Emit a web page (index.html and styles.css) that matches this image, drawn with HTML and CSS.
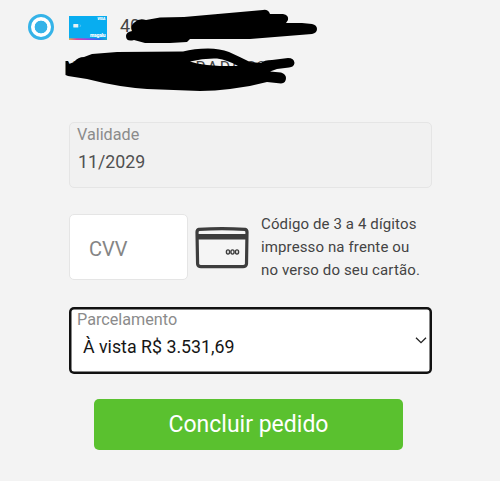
FILE: index.html
```html
<!DOCTYPE html>
<html lang="pt-BR">
<head>
<meta charset="utf-8">
<title>Pagamento</title>
<link rel="stylesheet" href="styles.css">
</head>
<body>
<main class="checkout">
  <section class="saved-card">
    <span class="radio"></span>
    <svg class="card-art" viewBox="0 0 38 24">
      <defs><linearGradient id="rainbow"><stop offset="0" stop-color="#ddb64c"/><stop offset=".2" stop-color="#e8409a"/><stop offset=".5" stop-color="#8a48e8"/><stop offset=".8" stop-color="#2c6cf0"/><stop offset="1" stop-color="#20b5c4"/></linearGradient></defs>
      <rect width="38" height="24" fill="#08adf0"/>
      <rect y="22.3" width="38" height="1.7" fill="url(#rainbow)"/>
      <rect x="4.3" y="8" width="5" height="3.4" rx=".5" fill="#e6f3f5"/>
      <path d="M11 8.6q1.2 1 0 2.3" stroke="#7bd0f3" stroke-width=".7" fill="none"/>
      <text x="28.3" y="4.4" class="brand" textLength="8">VISA</text>
      <text x="21" y="21" class="bank" textLength="15.5">magalu</text>
    </svg>
    <span class="number">40</span>
    <div class="holder"><span>N</span><span class="surname">RADO</span><span class="last">SO</span></div>
    <svg class="redaction" viewBox="0 0 500 100">
      <path d="M126 36Q126 32 132 31Q130 25 135 22Q139 18 146 20L160 17.5L184 17L263 10Q268 9 270 14L283 14Q289 15 288 20L286 23L302 23L312 24Q317 25 317 29Q317 33 312 34L250 39L190 39L187 42L170 43L145 43L134 40Q126 42 126 36Z"/>
      <path fill-rule="evenodd" d="M65.500 61L68 61L69 64L74 62Q78 57 84 57L92 54L117 52L183 51.500Q194 48.500 208 48.500Q220 48.500 229 52Q240 57 250 62L261 63Q264 60 272 60L288 58Q294 58 294.500 63Q294 67 289 67.500L277 69L270 71.500L281 72.500Q286 74 286 78Q286 83 281 83.500L267 82Q249 87 230 89Q215 91 200 91L147 89Q118 87 87 79L68 76L65.500 75ZM190 61.500L197 63.500L207 65L220 66L238 66Q228 60 217 58.500Q204 58 190 61.500Z"/>
    </svg>
  </section>
  <section class="form">
    <div class="field expiry"><label>Validade</label><span class="value">11/2029</span></div>
    <div class="security">
      <div class="cvv">CVV</div>
      <svg class="cvv-icon" viewBox="0 0 54 42">
        <path d="M4 2.400Q27 .8 50 2.400Q52 3 52 5L51.500 37Q51 39.600 48 39.600H6Q3 39.600 2.600 37L2 5Q2 3 4 2.400Z" fill="#f5f5f5" stroke="#3d3d3d" stroke-width="3.200"/>
        <path d="M2 9.700H52" stroke="#3d3d3d" stroke-width="5.400"/>
        <g fill="none" stroke="#3d3d3d" stroke-width="1.400"><ellipse cx="33" cy="25" rx="1.600" ry="2.100"/><ellipse cx="37.500" cy="25" rx="1.600" ry="2.100"/><ellipse cx="42" cy="25" rx="1.600" ry="2.100"/></g>
      </svg>
      <p class="hint">Código de 3 a 4 dígitos<br>impresso na frente ou<br>no verso do seu cartão.</p>
    </div>
    <div class="field installments">
      <label>Parcelamento</label><span class="value">À vista R$ 3.531,69</span>
      <svg class="chevron" viewBox="0 0 12 7"><path d="M1 .8L6 5.600L11 .8" fill="none" stroke="#222" stroke-width="1.300"/></svg>
    </div>
    <button class="submit">Concluir pedido</button>
  </section>
</main>
</body>
</html>
```
FILE: styles.css
```css
* { box-sizing: border-box; }
body { margin: 0; background: #f3f3f3; font-family: Roboto, "Liberation Sans", sans-serif; color: #444; }
.checkout { width: 500px; height: 481px; overflow: hidden; }
.saved-card {
  position: relative;
  height: 122px;
  padding: 14px 0 0 28px;
  display: grid;
  grid-template-columns: 26px 38px 1fr;
  grid-template-rows: 26px 42px;
  column-gap: 15px;
}
.radio { width: 26px; height: 26px; border: 3px solid #35b3e8; border-radius: 50%; background: radial-gradient(circle, #35b3e8 0 6px, #fff 6.700px); }
.card-art { width: 38px; height: 24px; margin-top: 2px; }
.brand, .bank { fill: #fff; font-weight: 900; }
.brand { font-size: 4px; font-style: italic; }
.bank { font-size: 5px; }
.number { font-size: 18px; line-height: 24px; margin-left: -2px; }
.holder { grid-column: 2 / 4; display: flex; font-size: 16px; line-height: 20px; margin: 18px 0 0 -4px; white-space: nowrap; }
.surname { margin-left: 119px; letter-spacing: 2px; }
.last { margin-left: 1px; }
.redaction { position: absolute; left: 0; top: 0; width: 500px; height: 100px; }
.form { width: 363px; margin-left: 69px; display: flex; flex-direction: column; }
.field { height: 66px; display: flex; flex-direction: column; border-radius: 5px; }
.field label { font-size: 16.200px; line-height: 20px; color: #8b8b8b; }
.expiry { border: 1px solid #e5e5e5; background: #f1f1f1; padding: 2px 7px; }
.expiry .value { font-size: 17.800px; line-height: 24px; margin: 5px 0 0 1px; color: #505050; }
.security { display: flex; align-items: center; height: 66px; margin: 26px 0 28px; }
.cvv { width: 119px; height: 66px; border: 1px solid #e5e5e5; border-radius: 5px; background: #fff; padding: 1px 0 0 19px; font-size: 20px; line-height: 66px; color: #858585; }
.cvv-icon { width: 54px; height: 42px; margin: 2px 0 0 7px; }
.hint { margin: 1px 0 0 12px; font-size: 15px; letter-spacing: .12px; line-height: 23px; white-space: nowrap; }
.installments { position: relative; box-shadow: inset 0 0 0 2.500px #111; background: #fff; padding: 3px 8px; margin-top: -1px; height: 67px; }
.installments .value { font-size: 17.800px; line-height: 24px; margin: 5px 0 0 6px; color: #151515; }
.chevron { position: absolute; right: 5px; top: 30px; width: 12px; height: 7px; }
.submit { width: 309px; height: 51px; margin: 25px 0 0 25px; padding: 0; border: 0; border-radius: 5px; background: #5ac12f; color: #fff; font: 23px/51px Roboto, "Liberation Sans", sans-serif; }
```
